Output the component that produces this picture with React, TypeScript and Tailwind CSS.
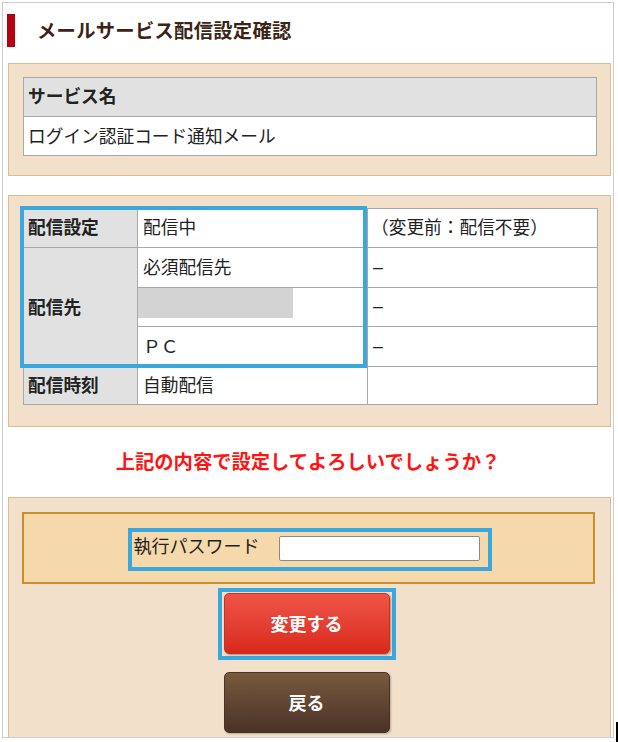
import React from "react";

const cellB = "border border-[#a8a8a8]";

function Dash() {
  return <span className="font-['Liberation_Sans',sans-serif]">–</span>;
}

export default function App() {
  return (
    <div className="relative w-[618px] h-[742px] overflow-hidden bg-white font-['Meiryo','Noto_Sans_CJK_JP',sans-serif] text-[#222]">
      <div className="ml-[2px] mt-[2px] w-[612px] h-[736px] border border-[#cdcdcd] overflow-hidden">
        {/* Title */}
        <div className="flex items-center pl-[4px] pt-[7px] h-[41px] box-content">
          <div className="w-[8px] h-[33px] bg-[#b5000f]" />
          <div className="ml-[22px] text-[19.3px] font-bold text-[#3b2415] leading-none tracking-[0.3px]">
            メールサービス配信設定確認
          </div>
        </div>

        {/* Panel 1 */}
        <div className="ml-[5px] mt-[12px] w-[603px] border border-[#dcbb97] bg-[#f2e0cb] pl-[14px] pr-[13px] pt-[13px] pb-[19px]">
          <table className="w-[574px] table-fixed border-collapse bg-white text-[17.7px] leading-none">
            <tbody>
              <tr className="h-[39px]">
                <td className={`${cellB} bg-[#e1e1e1] font-bold pl-[4px] pb-[3px]`}>サービス名</td>
              </tr>
              <tr className="h-[39px]">
                <td className={`${cellB} pl-[4px]`}>ログイン認証コード通知メール</td>
              </tr>
            </tbody>
          </table>
        </div>

        {/* Panel 2 */}
        <div className="ml-[5px] mt-[19px] w-[603px] border border-[#dcbb97] bg-[#f2e0cb] pl-[14px] pr-[13px] pt-[12px] pb-[21px]">
          <div className="relative">
            <table className="w-[574px] table-fixed border-collapse bg-white text-[17.7px] leading-none">
              <colgroup>
                <col className="w-[114px]" />
                <col className="w-[230px]" />
                <col className="w-[230px]" />
              </colgroup>
              <tbody>
                <tr className="h-[39px]">
                  <td className={`${cellB} bg-[#e1e1e1] font-bold pl-[4px] pb-[2px]`}>配信設定</td>
                  <td className={`${cellB} pl-[5px] pb-[2px]`}>配信中</td>
                  <td className={`${cellB} pl-[3px] pb-[2px]`}>（変更前：配信不要）</td>
                </tr>
                <tr className="h-[40px]">
                  <td rowSpan={3} className={`${cellB} bg-[#e1e1e1] font-bold pl-[4px]`}>配信先</td>
                  <td className={`${cellB} pl-[5px] pb-[2px]`}>必須配信先</td>
                  <td className={`${cellB} pl-[5px] pb-[2px]`}><Dash /></td>
                </tr>
                <tr className="h-[39px]">
                  <td className={`${cellB} p-0 align-top`}>
                    <div className="w-[155px] h-[30px] bg-[#d3d3d3]" />
                  </td>
                  <td className={`${cellB} pl-[5px] pb-[2px]`}><Dash /></td>
                </tr>
                <tr className="h-[40px]">
                  <td className={`${cellB} pl-[5px] pb-[2px]`}>ＰＣ</td>
                  <td className={`${cellB} pl-[5px] pb-[2px]`}><Dash /></td>
                </tr>
                <tr className="h-[38px]">
                  <td className={`${cellB} bg-[#e1e1e1] font-bold pl-[4px] pb-[2px]`}>配信時刻</td>
                  <td className={`${cellB} pl-[5px] pb-[2px]`}>自動配信</td>
                  <td className={`${cellB}`}></td>
                </tr>
              </tbody>
            </table>
            <div className="absolute left-[-3px] top-[-2px] w-[347px] h-[162px] border-4 border-[#3aa8dc] pointer-events-none" />
          </div>
        </div>

        {/* Question */}
        <div className="h-[70px] flex items-center justify-center text-[19.3px] font-bold text-[#ff1414] leading-none">
          上記の内容で設定してよろしいでしょうか？
        </div>

        {/* Panel 3 */}
        <div className="ml-[5px] w-[603px] h-[300px] border border-[#dcbb97] bg-[#f2e0cb] pl-[13px] pr-[15px] pt-[14px]">
          <div className="h-[72px] border-2 border-[#c98f2b] bg-[#f5d9aa] flex items-center justify-center">
            <div className="relative flex items-center mr-[4px]">
              <div className="absolute left-[-6px] right-[-12px] top-[-8px] bottom-[-10px] border-4 border-[#3aa8dc] pointer-events-none" />
              <span className="text-[18px] leading-none text-[#222] mt-[-6px]">執行パスワード</span>
              <input
                type="text"
                className="ml-[19px] w-[201px] h-[25px] bg-white border border-[#8a8a8a] rounded-[2px] outline-none"
              />
            </div>
          </div>

          <div className="flex flex-col items-center mt-[9px] mr-[4px]">
            <div className="relative">
              <div className="absolute -left-[6px] -right-[6px] -top-[5px] -bottom-[6px] border-4 border-[#3aa8dc]" />
              <button className="relative w-[166px] h-[61px] rounded-[5px] border border-[#c6321f] bg-gradient-to-b from-[#ef5447] to-[#d8281a] text-white text-[18px] font-bold shadow-[1px_1px_2px_rgba(0,0,0,0.35)]">
                変更する
              </button>
            </div>
            <button className="mt-[18px] w-[166px] h-[61px] rounded-[5px] border border-[#4a3226] bg-gradient-to-b from-[#785a3e] to-[#4b3227] text-white text-[18px] font-bold shadow-[1px_1px_2px_rgba(0,0,0,0.25)]">
              戻る
            </button>
          </div>
        </div>
      </div>
      <div className="absolute left-[616px] top-[722px] w-[2px] h-[20px] bg-black" />
    </div>
  );
}
